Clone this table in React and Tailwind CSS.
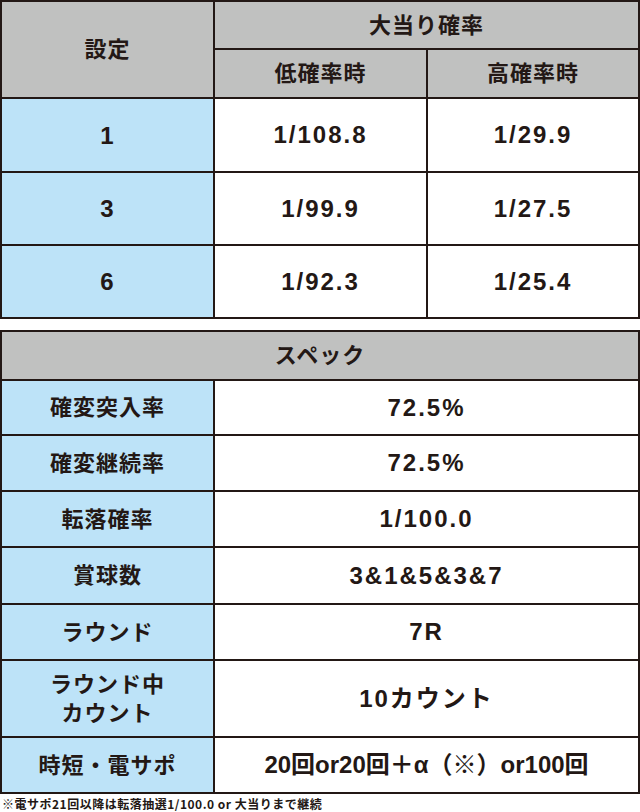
import React from "react";

const jp = { fontFamily: '"Liberation Sans", "Noto Sans CJK JP", sans-serif' };

const rates = [
  { setting: "1", low: "1/108.8", high: "1/29.9" },
  { setting: "3", low: "1/99.9", high: "1/27.5" },
  { setting: "6", low: "1/92.3", high: "1/25.4" },
];

const specs = [
  { label: "確変突入率", value: "72.5%" },
  { label: "確変継続率", value: "72.5%" },
  { label: "転落確率", value: "1/100.0" },
  { label: "賞球数", value: "3&1&5&3&7" },
  { label: "ラウンド", value: "7R" },
  { label: ["ラウンド中", "カウント"], value: "10カウント" },
  { label: "時短・電サポ", value: "20回or20回＋α（※）or100回", tight: true },
];

const cell = "flex items-center justify-center text-center font-bold text-[#231815]";
const headCell = cell + " bg-[#c0c1c0] text-[22px] tracking-[1px]";
const sideCell = cell + " bg-[#bde3f8] text-[22px] tracking-[1px] leading-[29px]";
const valCell = cell + " bg-white text-[24px] tracking-[2px]";
const tightCell = cell + " bg-white text-[24px] tracking-[0px]";

export default function App() {
  return (
    <div className="w-[640px] bg-white" style={jp}>
      <div className="grid grid-cols-[211px_211px_210px] grid-rows-[46px_47px_72px_71px_71px] gap-[2px] p-[2px] bg-[#231815]">
        <div className={headCell + " row-span-2"}>設定</div>
        <div className={headCell + " col-span-2"}>大当り確率</div>
        <div className={headCell}>低確率時</div>
        <div className={headCell}>高確率時</div>
        {rates.map((r) => (
          <React.Fragment key={r.setting}>
            <div className={sideCell + " text-[24px]"}>{r.setting}</div>
            <div className={valCell}>{r.low}</div>
            <div className={valCell}>{r.high}</div>
          </React.Fragment>
        ))}
      </div>

      <div className="mt-[11px] grid grid-cols-[211px_1fr] grid-rows-[47px_53px_54px_54px_55px_54px_75px_54px] gap-[2px] p-[2px] bg-[#231815]">
        <div className={headCell + " col-span-2"}>スペック</div>
        {specs.map((s, i) => (
          <React.Fragment key={i}>
            <div className={sideCell}>
              {Array.isArray(s.label) ? (
                <div>
                  {s.label.map((l) => (
                    <div key={l}>{l}</div>
                  ))}
                </div>
              ) : (
                s.label
              )}
            </div>
            <div className={s.tight ? tightCell : valCell}>{s.value}</div>
          </React.Fragment>
        ))}
      </div>

      <p className="mt-[3px] pl-[2px] text-[12px] leading-[14px] tracking-[0.5px] font-bold text-[#231815]" style={{ fontFamily: '"Noto Sans CJK JP", sans-serif' }}>
        ※電サポ21回以降は転落抽選1/100.0 or 大当りまで継続
      </p>
    </div>
  );
}
